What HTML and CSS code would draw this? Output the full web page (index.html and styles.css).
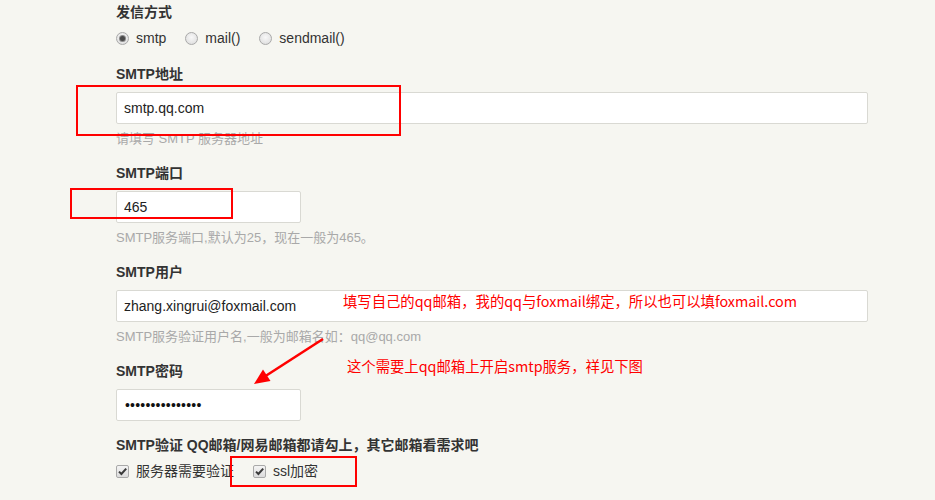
FILE: index.html
```html
<!DOCTYPE html>
<html lang="zh-CN">
<head>
<meta charset="utf-8">
<title>邮件设置</title>
<link rel="stylesheet" href="styles.css">
</head>
<body>
<div class="form">
  <div class="field">
    <div class="label tight">发信方式</div>
    <div class="choices">
      <label class="choice"><span class="radio checked"></span>smtp</label>
      <label class="choice"><span class="radio"></span>mail()</label>
      <label class="choice"><span class="radio"></span>sendmail()</label>
    </div>
  </div>
  <div class="field">
    <div class="label">SMTP地址</div>
    <input class="input" type="text" value="smtp.qq.com">
    <div class="help">请填写 SMTP 服务器地址</div>
  </div>
  <div class="field">
    <div class="label">SMTP端口</div>
    <input class="input short" type="text" value="465">
    <div class="help">SMTP服务端口,默认为25，现在一般为465。</div>
  </div>
  <div class="field">
    <div class="label">SMTP用户</div>
    <input class="input" type="text" value="zhang.xingrui@foxmail.com">
    <div class="help">SMTP服务验证用户名,一般为邮箱名如：qq@qq.com</div>
  </div>
  <div class="field">
    <div class="label">SMTP密码</div>
    <div class="input short pass">•••••••••••••••</div>
  </div>
  <div class="field">
    <div class="label tight">SMTP验证 QQ邮箱/网易邮箱都请勾上，其它邮箱看需求吧</div>
    <div class="choices">
      <label class="choice"><span class="check"><svg width="11" height="11" viewBox="0 0 11 11"><path d="M2 5.6 L4.4 8 L9.2 2.6" fill="none" stroke="#3a3a3a" stroke-width="2"/></svg></span>服务器需要验证</label>
      <label class="choice"><span class="check"><svg width="11" height="11" viewBox="0 0 11 11"><path d="M2 5.6 L4.4 8 L9.2 2.6" fill="none" stroke="#3a3a3a" stroke-width="2"/></svg></span>ssl加密</label>
    </div>
  </div>
</div>

<div class="mark box1"></div>
<div class="mark box2"></div>
<div class="mark box3"></div>
<div class="note note1">填写自己的qq邮箱，我的qq与foxmail绑定，所以也可以填foxmail.com</div>
<div class="note note2">这个需要上qq邮箱上开启smtp服务，祥见下图</div>
<svg class="arrow" width="935" height="500" viewBox="0 0 935 500">
  <line x1="323" y1="339" x2="264" y2="377" stroke="#ff0000" stroke-width="2.6"/>
  <polygon points="254,384 270.5,381 263,369.5" fill="#ff0000"/>
</svg>
</body>
</html>
```
FILE: styles.css
```css
html, body {
  margin: 0;
  padding: 0;
}
body {
  background: #f6f6f1;
  font-family: "Liberation Sans", Arial, "Noto Sans CJK SC", sans-serif;
  font-size: 14px;
  color: #333;
  width: 935px;
  height: 500px;
  overflow: hidden;
}
.form {
  margin-left: 116px;
  width: 752px;
  padding-top: 2px;
}
.field {
  margin-bottom: 14px;
}
.field:first-child {
  margin-bottom: 16px;
}
.label {
  font-weight: bold;
  font-size: 14px;
  line-height: 20px;
  color: #333;
  margin-bottom: 8px;
}
.label.tight {
  margin-bottom: 6px;
}
.choices {
  display: flex;
  gap: 19px;
  line-height: 20px;
  height: 20px;
}
.choice {
  display: flex;
  align-items: center;
  gap: 7px;
  color: #333;
  font-size: 14px;
}
.radio {
  width: 13px;
  height: 13px;
  box-sizing: border-box;
  border-radius: 50%;
  border: 1px solid #a9a9a9;
  background: radial-gradient(circle at 50% 40%, #f8f8f8 0%, #e6e6e6 60%, #d6d6d6 100%);
  display: flex;
  align-items: center;
  justify-content: center;
}
.radio.checked::after {
  content: "";
  width: 5px;
  height: 5px;
  border-radius: 50%;
  background: #4a4a4a;
  box-shadow: 0 0 0 1px #8a8a8a;
}
.check {
  width: 13px;
  height: 13px;
  box-sizing: border-box;
  border: 1px solid #a9a9a9;
  border-radius: 2px;
  background: linear-gradient(#f4f4f4, #dcdcdc);
  display: flex;
  align-items: center;
  justify-content: center;
}
.check svg {
  display: block;
}
.input {
  display: block;
  box-sizing: border-box;
  width: 752px;
  height: 32px;
  margin: 0;
  border: 1px solid #d9d9d3;
  border-radius: 2px;
  background: #fff;
  padding: 0 7px;
  font-family: "Liberation Sans", Arial, "Noto Sans CJK SC", sans-serif;
  font-size: 14px;
  color: #222;
  outline: none;
}
.input.short {
  width: 185px;
}
.pass {
  line-height: 30px;
  padding-left: 8px;
  letter-spacing: 0.2px;
  color: #111;
}
.help {
  margin-top: 5px;
  font-size: 13px;
  line-height: 20px;
  color: #a9a9a9;
}
.mark {
  position: absolute;
  box-sizing: border-box;
  border: 2px solid #ff0000;
}
.box1 { left: 76px; top: 85px; width: 325px; height: 51px; }
.box2 { left: 70px; top: 188px; width: 163px; height: 31px; }
.box3 { left: 230px; top: 456px; width: 127px; height: 31px; }
.note {
  position: absolute;
  font-family: "Noto Sans CJK SC", sans-serif;
  font-size: 14.35px;
  line-height: 20px;
  color: #ff0000;
  white-space: nowrap;
}
.note1 { left: 343px; top: 291px; }
.note2 { left: 347px; top: 356px; }
.arrow {
  position: absolute;
  left: 0;
  top: 0;
  pointer-events: none;
}
```
